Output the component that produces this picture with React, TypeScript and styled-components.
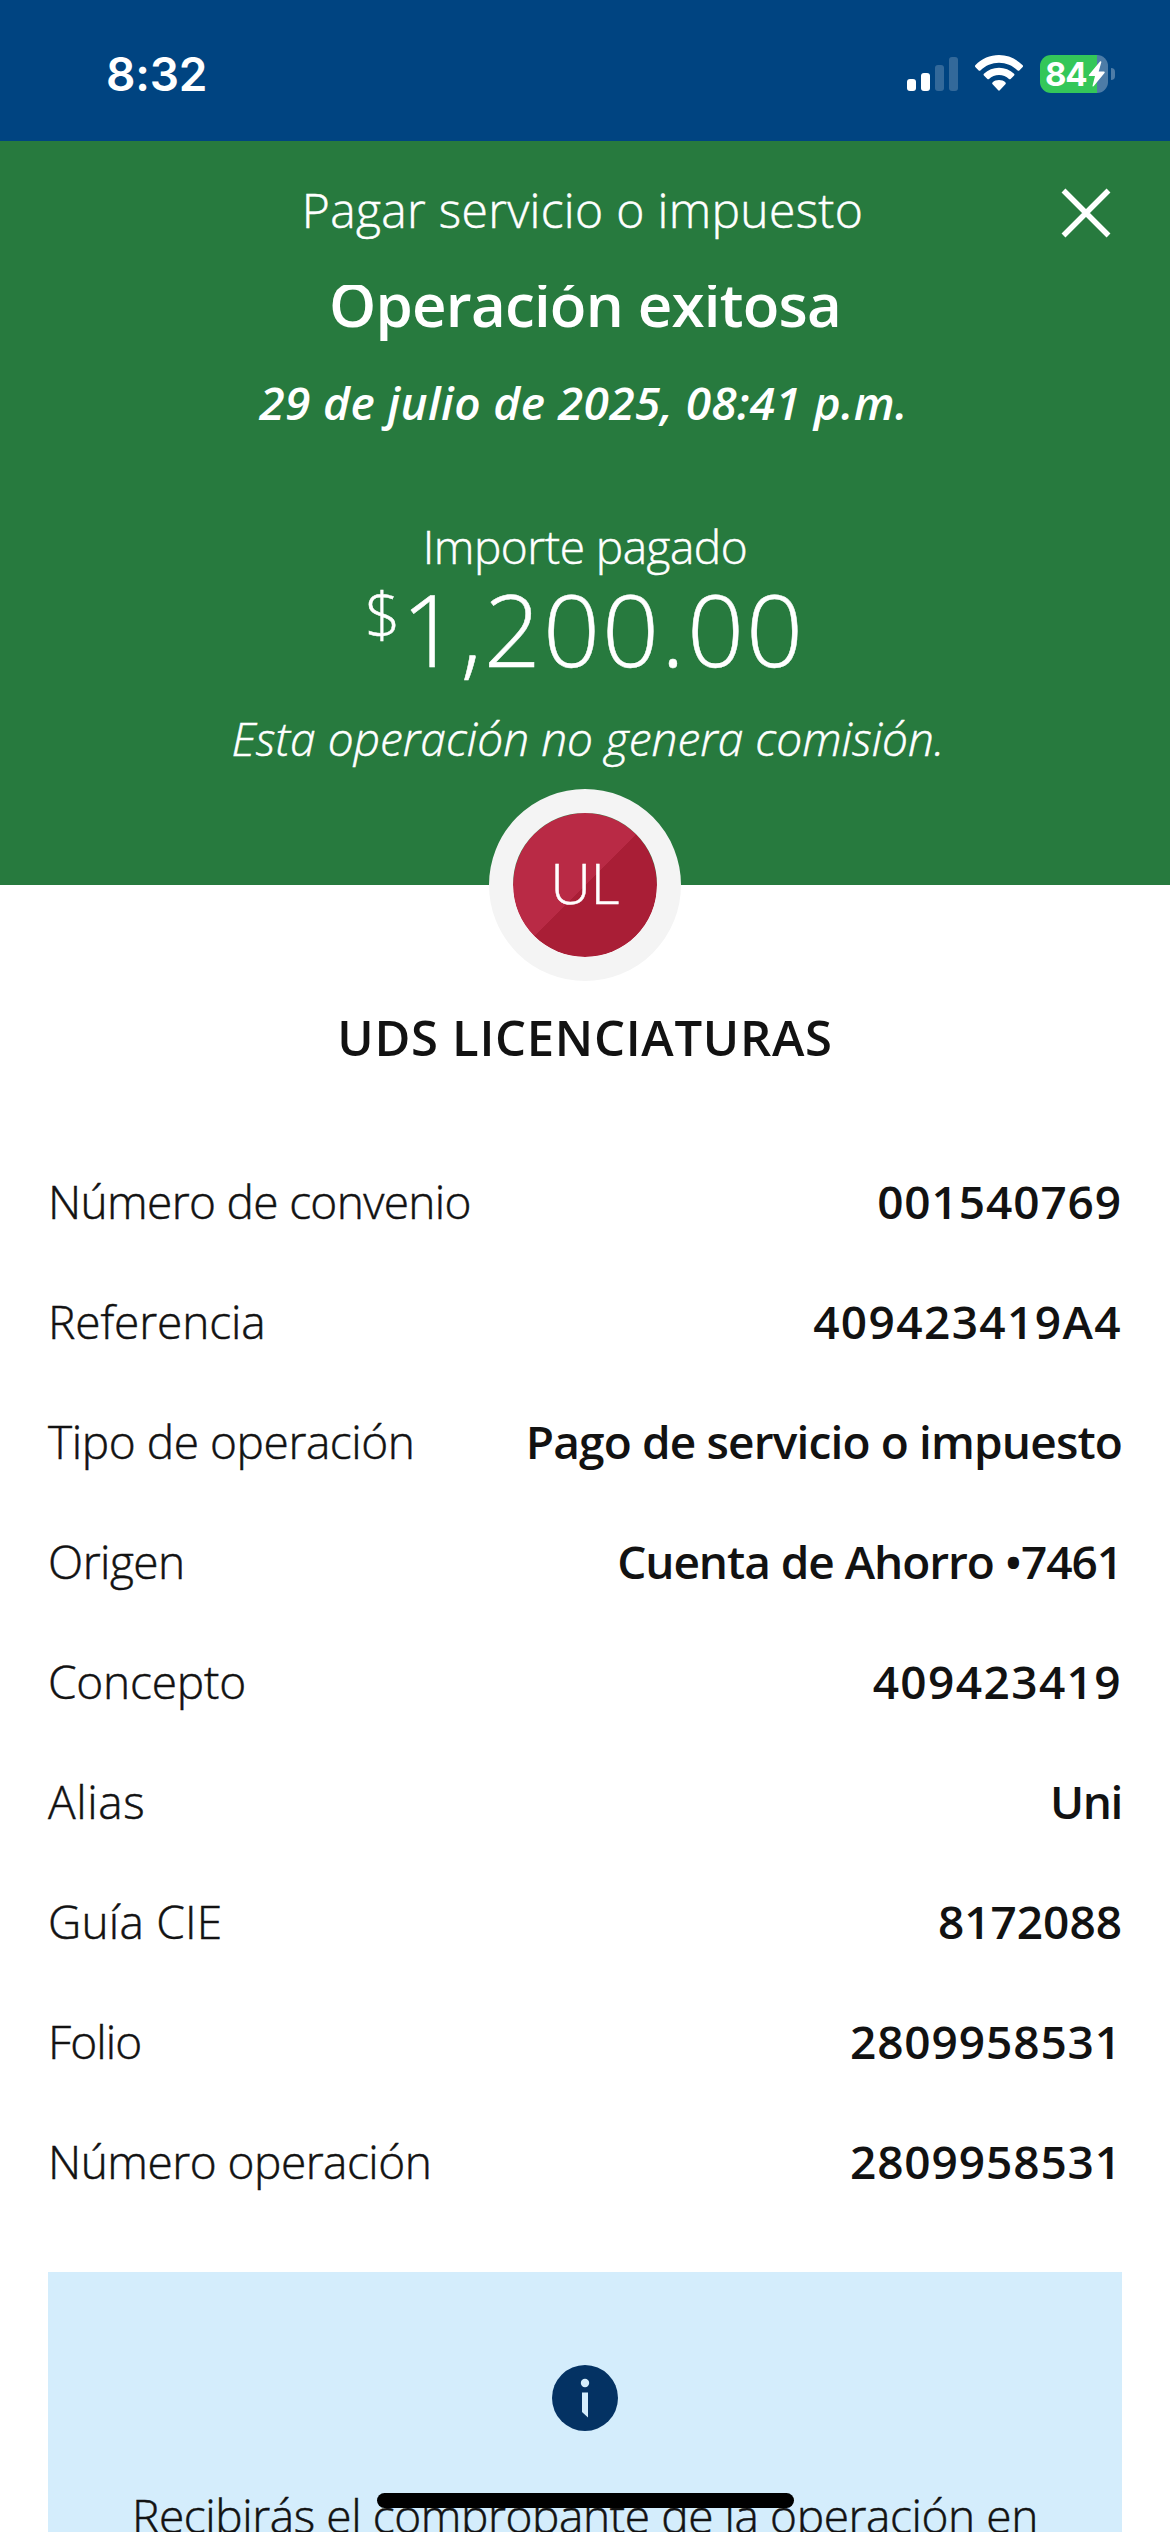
import React from 'react';
import styled, { createGlobalStyle, css } from 'styled-components';

const GlobalStyle = createGlobalStyle`
  * { box-sizing: border-box; }
  body {
    margin: 0;
    background: #fff;
    color: #121212;
    font-family: "Open Sans", "Noto Sans", sans-serif;
  }
`;

const bookWeight = css`
  font-weight: 300;
  -webkit-text-stroke: 0.5px currentColor;
`;

const Screen = styled.div`
  position: relative;
  width: 1170px;
  height: 2532px;
  overflow: hidden;
  display: flex;
  flex-direction: column;
  background: #fff;
`;

const StatusBar = styled.div`
  flex: none;
  height: 141px;
  padding: 0 55px 0 106px;
  display: flex;
  align-items: flex-start;
  justify-content: space-between;
  background: #004481;
  color: #fff;
  font-family: Inter, "Liberation Sans", sans-serif;
`;

const Time = styled.div`
  margin-top: 44px;
  font-size: 46px;
  line-height: 60px;
  font-weight: 600;
  letter-spacing: -0.2px;
`;

const StatusIcons = styled.div`
  margin-top: 55px;
  display: flex;
  align-items: flex-start;
`;

const SignalIcon = styled.svg`
  width: 51px;
  height: 38px;
  margin-right: 16px;
`;

const WifiIcon = styled.svg`
  width: 50px;
  height: 38px;
  margin-right: 16px;
`;

const Battery = styled.div`
  width: 68px;
  height: 38px;
  padding-left: 5px;
  display: flex;
  align-items: center;
  border-radius: 11px;
  background: linear-gradient(90deg, #34c759 57px, #4d7ca7 57px);
  font-size: 33px;
  line-height: 38px;
  font-weight: 700;
  letter-spacing: -1.3px;
`;

const BoltIcon = styled.svg`
  width: 17px;
  height: 26px;
  margin-left: 2px;
`;

const BatteryCap = styled.div`
  width: 4px;
  height: 12px;
  margin: 13px 0 0 3px;
  border-radius: 0 4px 4px 0;
  background: #4d7ca7;
`;

const Header = styled.header`
  flex: none;
  height: 144px;
  padding: 0 46px;
  display: grid;
  grid-template-columns: 76px 1fr 76px;
  align-items: center;
  background: #277a3e;
  color: #fff;
`;

const HeaderTitle = styled.h1`
  grid-column: 2;
  margin: 0;
  padding: 0 5px 7px 0;
  text-align: center;
  font-size: 48px;
  line-height: 60px;
  ${bookWeight}
  letter-spacing: 0.32px;
  white-space: nowrap;
`;

const CloseButton = styled.button`
  justify-self: end;
  width: 76px;
  height: 76px;
  padding: 0;
  border: 0;
  background: none;
  display: flex;
  align-items: center;
  justify-content: center;
`;

const Scroll = styled.main`
  flex: 1;
  min-height: 0;
  overflow: hidden;
  display: flex;
  flex-direction: column;
`;

const Hero = styled.section`
  flex: none;
  height: 600px;
  display: flex;
  flex-direction: column;
  align-items: center;
  background: #277a3e;
  color: #fff;
  white-space: nowrap;
`;

const ResultTitle = styled.h2`
  margin: -17px 0 0;
  font-size: 60px;
  line-height: 72px;
  font-weight: 600;
  letter-spacing: -0.8px;
`;

const ResultDate = styled.div`
  margin-top: 32px;
  padding-right: 3px;
  font-size: 46px;
  line-height: 60px;
  font-weight: 600;
  font-style: italic;
  letter-spacing: 0.4px;
`;

const AmountLabel = styled.div`
  margin-top: 84px;
  font-size: 46px;
  line-height: 60px;
  ${bookWeight}
  letter-spacing: -0.5px;
`;

const Amount = styled.div`
  margin-top: 2px;
  display: flex;
  align-items: flex-start;
  font-size: 100px;
  line-height: 100px;
  ${bookWeight}
  letter-spacing: 2px;
`;

const Currency = styled.span`
  margin-right: 1px;
  font-size: 62px;
  line-height: 73px;
  letter-spacing: 0;
`;

const Fee = styled.div`
  margin-top: 30px;
  padding-left: 6px;
  font-size: 46px;
  line-height: 60px;
  ${bookWeight}
  font-style: italic;
  letter-spacing: 0.05px;
`;

const Avatar = styled.div`
  flex: none;
  align-self: center;
  width: 192px;
  height: 192px;
  margin-top: -96px;
  padding-bottom: 6px;
  border: 24px solid #f4f4f4;
  border-radius: 50%;
  display: flex;
  align-items: center;
  justify-content: center;
  background: linear-gradient(135deg, #b92a45 50%, #a91e36 50%) padding-box;
  color: #fff;
  font-size: 56px;
  line-height: 60px;
  ${bookWeight}
`;

const Payee = styled.h3`
  margin: 26px 0 74px;
  text-align: center;
  font-size: 49px;
  line-height: 60px;
  font-weight: 600;
  letter-spacing: 0.7px;
`;

const Details = styled.dl`
  flex: none;
  margin: 0;
  padding: 0 48px;
`;

const Detail = styled.div`
  height: 120px;
  display: flex;
  justify-content: space-between;
  font-size: 46px;
  line-height: 120px;
  white-space: nowrap;
`;

const Label = styled.dt<{ $tracking: number }>`
  ${bookWeight}
  letter-spacing: ${(p) => p.$tracking}px;
`;

const Value = styled.dd<{ $tracking: number }>`
  margin: 0;
  font-weight: 600;
  letter-spacing: ${(p) => p.$tracking}px;
`;

const Notice = styled.aside`
  flex: none;
  height: 400px;
  margin: 51px 48px 0;
  padding-top: 93px;
  display: flex;
  flex-direction: column;
  align-items: center;
  gap: 50px;
  background: #d4edfc;
`;

const NoticeText = styled.p`
  margin: 0;
  font-size: 46px;
  line-height: 68px;
  ${bookWeight}
  letter-spacing: -0.4px;
  white-space: nowrap;
`;

const HomeIndicator = styled.div`
  position: absolute;
  left: 377px;
  bottom: 24px;
  width: 417px;
  height: 15px;
  border-radius: 8px;
  background: #000;
`;

const details = [
  { label: 'Número de convenio', lt: -0.65, value: '001540769', vt: 0.9 },
  { label: 'Referencia', lt: -0.1, value: '409423419A4', vt: 1.4 },
  { label: 'Tipo de operación', lt: -0.42, value: 'Pago de servicio o impuesto', vt: -0.85 },
  { label: 'Origen', lt: -0.5, value: 'Cuenta de Ahorro •7461', vt: -1.05 },
  { label: 'Concepto', lt: -0.2, value: '409423419', vt: 1.4 },
  { label: 'Alias', lt: 0.6, value: 'Uni', vt: -1.4 },
  { label: 'Guía CIE', lt: 0.2, value: '8172088', vt: 0 },
  { label: 'Folio', lt: -0.9, value: '2809958531', vt: 0.9 },
  { label: 'Número operación', lt: -0.5, value: '2809958531', vt: 0.9 },
];

export default function App() {
  return (
    <Screen>
      <GlobalStyle />
      <StatusBar>
        <Time>8:32</Time>
        <StatusIcons>
          <SignalIcon viewBox="0 0 51 38" fill="#fff">
            <rect x="0" y="24" width="9" height="12" rx="3" />
            <rect x="14" y="18" width="9" height="18" rx="3" />
            <rect x="28" y="10" width="9" height="26" rx="3" opacity=".2" />
            <rect x="42" y="2" width="9" height="34" rx="3" opacity=".2" />
          </SignalIcon>
          <WifiIcon viewBox="0 0 50 38" fill="#fff">
            <path d="M1.3 10.2C8 3.600 16 0 25 0s17 3.600 23.700 10.200c.5.500.5 1.200 0 1.700l-3.400 3.500c-.5.500-1.200.5-1.700 0C38.500 10.500 32 7.700 25 7.700S11.500 10.500 6.400 15.400c-.5.500-1.200.5-1.700 0L1.300 11.900c-.5-.5-.5-1.200 0-1.700z" />
            <path d="M9.900 18.700C14 14.900 19.300 12.700 25 12.700s11 2.200 15.100 6c.5.500.5 1.200 0 1.700l-3.500 3.500c-.5.500-1.100.5-1.600 0-2.700-2.400-6.200-3.800-10-3.800s-7.300 1.400-10 3.800c-.5.500-1.100.5-1.600 0l-3.500-3.500c-.5-.5-.5-1.200 0-1.700z" />
            <path d="M18.500 27.400c1.700-1.500 4-2.300 6.500-2.300s4.800.8 6.500 2.300c.5.500.5 1.100.1 1.600l-5.800 6.300c-.5.500-1.100.5-1.600 0L18.400 29c-.4-.5-.4-1.100.1-1.600z" />
          </WifiIcon>
          <Battery>
            84
            <BoltIcon viewBox="0 0 17 26" fill="#fff">
              <path d="M12 .6 1 13.700c-.6.700-.2 1.400.6 1.400H7L4.600 24.600c-.2 1 .6 1.200 1.200.5L16.500 12c.5-.7.2-1.400-.6-1.400H10.700L13.300 1.200C13.500.2 12.600-.1 12 .6z" />
            </BoltIcon>
          </Battery>
          <BatteryCap />
        </StatusIcons>
      </StatusBar>

      <Header>
        <HeaderTitle>Pagar servicio o impuesto</HeaderTitle>
        <CloseButton aria-label="Cerrar">
          <svg width="50" height="50" viewBox="0 0 50 50" stroke="#fff" strokeWidth="5.500">
            <path d="M2.500 2.500l45 45M47.500 2.500l-45 45" />
          </svg>
        </CloseButton>
      </Header>

      <Scroll>
        <Hero>
          <ResultTitle>Operación exitosa</ResultTitle>
          <ResultDate>29 de julio de 2025, 08:41 p.m.</ResultDate>
          <AmountLabel>Importe pagado</AmountLabel>
          <Amount>
            <Currency>$</Currency>1,200.00
          </Amount>
          <Fee>Esta operación no genera comisión.</Fee>
        </Hero>
        <Avatar>UL</Avatar>
        <Payee>UDS LICENCIATURAS</Payee>
        <Details>
          {details.map((d) => (
            <Detail key={d.label}>
              <Label $tracking={d.lt}>{d.label}</Label>
              <Value $tracking={d.vt}>{d.value}</Value>
            </Detail>
          ))}
        </Details>
        <Notice>
          <svg width="66" height="66" viewBox="0 0 66 66">
            <circle cx="33" cy="33" r="33" fill="#043263" />
            <circle cx="33" cy="18" r="4.200" fill="#d4edfc" />
            <path d="M30 27.500h6v25l-6-5.500z" fill="#d4edfc" />
          </svg>
          <NoticeText>Recibirás el comprobante de la operación en</NoticeText>
        </Notice>
      </Scroll>
      <HomeIndicator />
    </Screen>
  );
}
